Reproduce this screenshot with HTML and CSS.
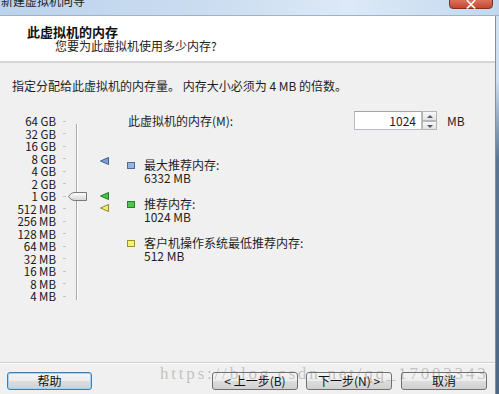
FILE: index.html
```html
<!DOCTYPE html>
<html lang="zh-CN">
<head>
    <meta charset="UTF-8">
    <title>新建虚拟机向导</title>
    <link rel="stylesheet" href="styles.css">
</head>
<body>
    <div class="window">
        <div class="titlebar">
            <span class="title-text">新建虚拟机向导</span>
            <span class="close-btn"><span class="close-x">×</span></span>
        </div>
        <div class="dialog">
            <div class="header">
                <div class="header-title">此虚拟机的内存</div>
                <div class="header-sub">您要为此虚拟机使用多少内存?</div>
            </div>
            <div class="content">
                <div class="desc">指定分配给此虚拟机的内存量。 内存大小必须为 4 MB 的倍数。</div>
                <div class="main">
                    <div class="scale">
                        <div class="scale-labels">
                            <div class="scale-row"><span>64 GB</span><i></i></div>
                            <div class="scale-row"><span>32 GB</span><i></i></div>
                            <div class="scale-row"><span>16 GB</span><i></i></div>
                            <div class="scale-row"><span>8 GB</span><i></i></div>
                            <div class="scale-row"><span>4 GB</span><i></i></div>
                            <div class="scale-row"><span>2 GB</span><i></i></div>
                            <div class="scale-row"><span>1 GB</span><i></i></div>
                            <div class="scale-row"><span>512 MB</span><i></i></div>
                            <div class="scale-row"><span>256 MB</span><i></i></div>
                            <div class="scale-row"><span>128 MB</span><i></i></div>
                            <div class="scale-row"><span>64 MB</span><i></i></div>
                            <div class="scale-row"><span>32 MB</span><i></i></div>
                            <div class="scale-row"><span>16 MB</span><i></i></div>
                            <div class="scale-row"><span>8 MB</span><i></i></div>
                            <div class="scale-row"><span>4 MB</span><i></i></div>
                        </div>
                        <div class="track"></div>

                        <!-- 滑块和标记 -->
                        <svg class="thumb" width="19" height="9" viewBox="0 0 19 9">
                            <defs>
                                <linearGradient id="tg" x1="0" y1="0" x2="0" y2="1">
                                    <stop offset="0" stop-color="#ffffff"/>
                                    <stop offset="1" stop-color="#d4d4d4"/>
                                </linearGradient>
                            </defs>
                            <path d="M0.5 4.5 Q3 0.5 6 0.5 H18.5 V8.5 H6 Q3 8.5 0.5 4.5 Z" fill="url(#tg)" stroke="#7a7a7a"/>
                        </svg>
                        <svg class="marker marker-max" width="9" height="8" viewBox="0 0 9 8">
                            <polygon points="0.5,4 8.5,0.5 8.5,7.5" fill="#7f9fd0" stroke="#3f5f95"/>
                        </svg>
                        <svg class="marker marker-rec" width="9" height="8" viewBox="0 0 9 8">
                            <polygon points="0.5,4 8.5,0.5 8.5,7.5" fill="#47c447" stroke="#217a21"/>
                        </svg>
                        <svg class="marker marker-min" width="9" height="8" viewBox="0 0 9 8">
                            <polygon points="0.5,4 8.5,0.5 8.5,7.5" fill="#f2ee6a" stroke="#8c8a24"/>
                        </svg>
                    </div>

                    <div class="panel">
                        <div class="mem-row">
                            <span class="mem-label">此虚拟机的内存(M):</span>
                            <span class="mem-input">1024</span>
                            <span class="spinner">
                                <span class="spin-up"></span>
                                <span class="spin-down"></span>
                            </span>
                            <span class="mem-unit">MB</span>
                        </div>
                        <div class="legend">
                            <div class="legend-item">
                                <span class="swatch swatch-max"></span>
                                <div>
                                    <div>最大推荐内存:</div>
                                    <div>6332 MB</div>
                                </div>
                            </div>
                            <div class="legend-item">
                                <span class="swatch swatch-rec"></span>
                                <div>
                                    <div>推荐内存:</div>
                                    <div>1024 MB</div>
                                </div>
                            </div>
                            <div class="legend-item">
                                <span class="swatch swatch-min"></span>
                                <div>
                                    <div>客户机操作系统最低推荐内存:</div>
                                    <div>512 MB</div>
                                </div>
                            </div>
                        </div>
                    </div>
                </div>
            </div>
            <div class="footer">
                <button class="btn btn-default">帮助</button>
                <div class="footer-right">
                    <button class="btn">&lt; 上一步(B)</button>
                    <button class="btn">下一步(N) &gt;</button>
                    <button class="btn btn-cancel">取消</button>
                </div>
            </div>
        </div>
        <div class="watermark">https://blog.csdn.net/qq_17003343</div>
    </div>
</body>
</html>
```

FILE: styles.css
```css
body {
    margin: 0;
    width: 499px;
    height: 394px;
    overflow: hidden;
    font-family: "Noto Sans CJK SC", "DejaVu Sans", sans-serif;
    font-size: 12px;
    color: #1e1e1e;
    background: linear-gradient(to bottom, #d3e3f4 0, #cddff1 80px, #5a7594 160px, #4d6886 100%);
}
.window {
    position: relative;
    height: 394px;
}
.titlebar {
    height: 15px;
    display: flex;
    overflow: hidden;
    border-bottom: 1px solid #9fb3c8;
    background: linear-gradient(to right, #bcd3ec 0, #cadcf0 40%, #dce9f7 70%, #c3d8ee 100%);
}
.title-text {
    margin-top: -6px;
    padding-left: 1px;
    font-size: 12px;
    line-height: 14px;
    color: #222;
}
.close-btn {
    margin-left: auto;
    margin-right: 6px;
    margin-top: -6px;
    width: 42px;
    height: 13px;
    border: 1px solid #7c3324;
    border-radius: 0 0 4px 4px;
    background: linear-gradient(to bottom, #e48f7a, #c7452d);
    text-align: center;
}
.close-x {
    color: #fff;
    font-size: 14px;
    line-height: 8px;
    font-weight: bold;
}
.dialog {
    width: 495px;
    border-right: 1px solid #8e8e8e;
    background: #f0f0f0;
}
.header {
    height: 47px;
    padding-left: 27px;
    padding-top: 9px;
    box-sizing: border-box;
    background: #fff;
    border-bottom: 2px solid #d6d6d6;
}
.header-title {
    font-size: 13px;
    font-weight: bold;
    line-height: 14px;
    color: #111;
}
.header-sub {
    margin-left: 28px;
    line-height: 13px;
    color: #222;
}
.content {
    height: 299px;
    padding: 16px 12px 0;
    box-sizing: border-box;
}
.desc {
    line-height: 14px;
}
.main {
    display: flex;
    margin-top: 18px;
}
.scale {
    position: relative;
    display: flex;
}
.scale-labels {
    width: 56px;
    padding-top: 4px;
}
.scale-row {
    height: 12.5px;
    display: flex;
    align-items: center;
    font-size: 11.5px;
    line-height: 12px;
    color: #161616;
}
.scale-row span {
    width: 44px;
    text-align: right;
    white-space: nowrap;
}
.scale-row i {
    width: 3px;
    height: 1px;
    margin-left: 7px;
    background: #c4c4c4;
}
.track {
    margin-left: 8px;
    margin-top: 13px;
    height: 176px;
    border-left: 1px solid #a8a8a8;
    box-shadow: 1px 0 0 #fff;
}
.thumb {
    position: absolute;
    left: 56px;
    top: 81px;
}
.marker {
    position: absolute;
    left: 88px;
}
.marker-max { top: 46px; }
.marker-rec { top: 81px; }
.marker-min { top: 93px; }
.panel {
    width: 343px;
    margin-left: 50px;
}
.mem-row {
    display: flex;
    align-items: center;
    height: 19px;
}
.mem-label {
    flex: 1;
    padding-left: 1px;
}
.mem-input {
    width: 68px;
    height: 19px;
    box-sizing: border-box;
    padding-right: 5px;
    text-align: right;
    line-height: 17px;
    background: #fff;
    border: 1px solid #b8bcc4;
    border-top-color: #a0a4ac;
}
.spinner {
    width: 15px;
    height: 19px;
    display: flex;
    flex-direction: column;
}
.spin-up, .spin-down {
    flex: 1;
    border: 1px solid #b6b6b6;
    background: linear-gradient(to bottom, #f8f8f8, #e2e2e2);
    position: relative;
}
.spin-up::after, .spin-down::after {
    content: "";
    position: absolute;
    left: 4px;
    top: 3px;
    border-left: 3px solid transparent;
    border-right: 3px solid transparent;
}
.spin-up::after {
    border-bottom: 3px solid #4a5a78;
}
.spin-down::after {
    border-top: 3px solid #4a5a78;
}
.mem-unit {
    width: 23px;
    margin-left: 10px;
}
.legend {
    margin-top: 28px;
    display: flex;
    flex-direction: column;
    gap: 13px;
}
.legend-item {
    display: flex;
    line-height: 13px;
}
.swatch {
    width: 8px;
    height: 7px;
    margin-top: 4px;
    margin-right: 9px;
    box-sizing: border-box;
    border: 1px solid;
}
.swatch-max {
    background: #9ab3da;
    border-color: #4c6b9c;
}
.swatch-rec {
    background: #4cc64c;
    border-color: #2a802a;
}
.swatch-min {
    background: #f6f26e;
    border-color: #959330;
}
.footer {
    display: flex;
    justify-content: space-between;
    padding: 9px 8px 6px 7px;
    border-top: 1px solid #cfcfcf;
    box-shadow: inset 0 1px 0 #fff;
}
.footer-right {
    display: flex;
    gap: 8px;
}
.btn {
    width: 86px;
    height: 18px;
    padding: 0;
    font-family: "Noto Sans CJK SC", "DejaVu Sans", sans-serif;
    font-size: 12px;
    line-height: 16px;
    color: #111;
    border: 1px solid #707070;
    border-radius: 3px;
    background: linear-gradient(to bottom, #f4f4f4 0, #ececec 50%, #dddddd 51%, #d0d0d0 100%);
}
.btn-default {
    width: 85px;
    border-color: #3c7fb1;
    box-shadow: inset 0 0 0 1px #9fd3f4;
}
.btn-cancel {
    margin-left: 1px;
}
.watermark {
    position: absolute;
    left: 160px;
    top: 364px;
    font-family: "Liberation Serif", serif;
    font-size: 17px;
    letter-spacing: 2.8px;
    color: rgba(120, 120, 120, 0.4);
    white-space: nowrap;
}
```
